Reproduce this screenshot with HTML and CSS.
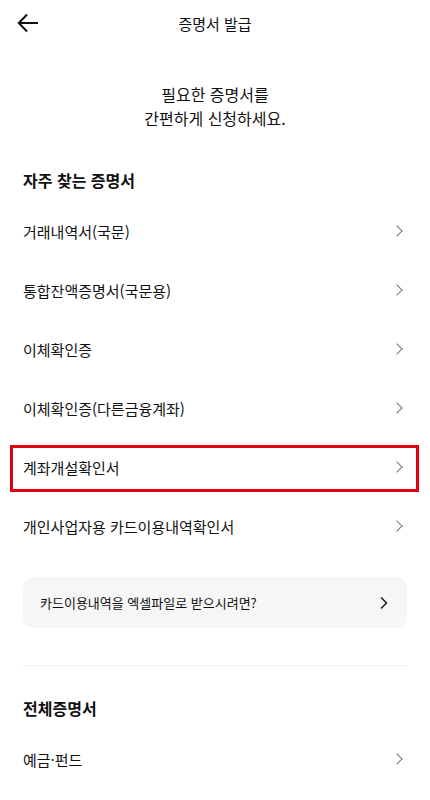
FILE: index.html
```html
<!DOCTYPE html>
<html lang="ko">
<head>
    <meta charset="UTF-8">
    <meta name="viewport" content="width=device-width, initial-scale=1.0">
    <title>증명서 발급</title>
    <link rel="stylesheet" href="styles.css">
</head>
<body>
    <header class="top_bar">
        <button class="back_btn" aria-label="뒤로">
            <svg width="22" height="20" viewBox="0 0 22 20">
                <path d="M21 10H2M10 1.5L1.8 10L10 18.5" fill="none" stroke="#111" stroke-width="2"/>
            </svg>
        </button>
        <h1 class="top_title">증명서 발급</h1>
    </header>

    <p class="intro">필요한 증명서를<br>간편하게 신청하세요.</p>

    <section class="cert_section">
        <h2 class="section_title">자주 찾는 증명서</h2>
        <ul class="cert_list">
            <li class="cert_item">거래내역서(국문)<span class="chev"></span></li>
            <li class="cert_item">통합잔액증명서(국문용)<span class="chev"></span></li>
            <li class="cert_item">이체확인증<span class="chev"></span></li>
            <li class="cert_item">이체확인증(다른금융계좌)<span class="chev"></span></li>
            <li class="cert_item selected">계좌개설확인서<span class="chev"></span></li>
            <li class="cert_item">개인사업자용 카드이용내역확인서<span class="chev"></span></li>
        </ul>

        <div class="excel_card">
            <span>카드이용내역을 엑셀파일로 받으시려면?</span>
            <svg width="10" height="14" viewBox="0 0 10 14">
                <path d="M2 1.5L7.5 7L2 12.5" fill="none" stroke="#222" stroke-width="1.6"/>
            </svg>
        </div>
    </section>

    <div class="divider"></div>

    <section class="cert_section">
        <h2 class="section_title">전체증명서</h2>
        <ul class="cert_list">
            <li class="cert_item">예금·펀드<span class="chev"></span></li>
        </ul>
    </section>
</body>
</html>
```

FILE: styles.css
```css
* {
    margin: 0;
    padding: 0;
    box-sizing: border-box;
}

body {
    width: 430px;
    background-color: #fff;
    color: #111;
    font-family: "Noto Sans CJK KR", "Noto Sans", sans-serif;
}

.top_bar {
    position: relative;
    height: 46px;
    display: flex;
    align-items: center;
    justify-content: center;
}

.back_btn {
    position: absolute;
    left: 17px;
    top: 13px;
    border: none;
    background: none;
    display: flex;
}

.top_title {
    font-size: 15px;
    font-weight: 400;
}

.intro {
    margin-top: 36px;
    text-align: center;
    font-size: 16px;
    line-height: 24px;
}

.cert_section {
    padding: 0 23px;
}

.section_title {
    margin-top: 38px;
    font-size: 16px;
    font-weight: 700;
    line-height: 24px;
}

.cert_list {
    list-style: none;
    margin-top: 11px;
}

.cert_item {
    height: 59px;
    padding-bottom: 3px;
    display: flex;
    align-items: center;
    justify-content: space-between;
    font-size: 15px;
    position: relative;
}

.selected::after {
    content: "";
    position: absolute;
    left: -13px;
    right: -12px;
    top: 6px;
    bottom: 6px;
    border: 3px solid #e4000f;
}

.chev {
    width: 8px;
    height: 8px;
    margin-right: 6px;
    border-top: 1.3px solid #777;
    border-right: 1.3px solid #777;
    transform: rotate(45deg);
}

.excel_card {
    margin-top: 20px;
    height: 51px;
    padding: 0 18px 0 17px;
    display: flex;
    align-items: center;
    justify-content: space-between;
    background-color: #f6f6f6;
    border-radius: 10px;
    font-size: 13px;
}

.divider {
    margin: 37px 23px 0;
    height: 1px;
    background-color: #f0f0f0;
}

.cert_section + .divider + .cert_section .section_title {
    margin-top: 30px;
}
```
